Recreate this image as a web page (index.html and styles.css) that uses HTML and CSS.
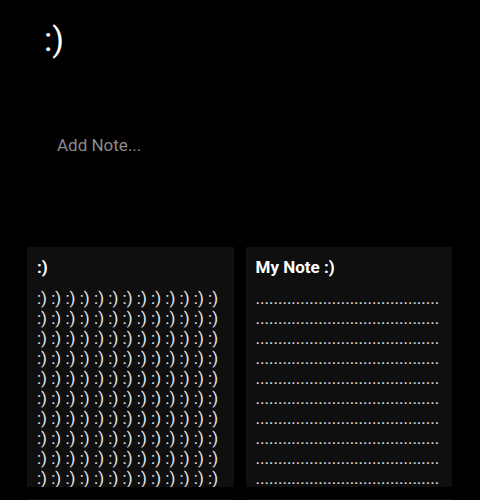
FILE: index.html
```html
<!DOCTYPE html>
<html>
<head>
<meta charset="utf-8">
<link rel="stylesheet" href="styles.css">
</head>
<body>
<div class="app">
  <h1 class="logo">:)</h1>
  <form class="add-form">
    <input class="add-input" type="text" placeholder="Add Note...">
  </form>
  <div class="notes">
    <div class="note">
      <div class="note-title">:)</div>
      <div class="note-body">:) :) :) :) :) :) :) :) :) :) :) :) :) :) :) :) :) :) :) :) :) :) :) :) :) :) :) :) :) :) :) :) :) :) :) :) :) :) :) :) :) :) :) :) :) :) :) :) :) :) :) :) :) :) :) :) :) :) :) :) :) :) :) :) :) :) :) :) :) :) :) :) :) :) :) :) :) :) :) :) :) :) :) :) :) :) :) :) :) :) :) :) :) :) :) :) :) :) :) :) :) :) :) :) :) :) :) :) :) :) :) :) :) :) :) :) :) :) :) :) :) :) :) :) :) :) :) :) :) :) :) :) :) :) :) :) :) :) :) :)</div>
    </div>
    <div class="note">
      <div class="note-title">My Note :)</div>
      <div class="note-body dots">.........................................................................................................................................................................................................................................................................................................................................................................................................................................................</div>
    </div>
    <div class="note"></div>
    <div class="note"></div>
  </div>
</div>
</body>
</html>
```
FILE: styles.css
```css
* { box-sizing: border-box; }
html, body {
  margin: 0;
  background: #000;
  color: #fff;
  font-family: Roboto, "Noto Sans", sans-serif;
  font-size: 17px;
}
.app {
  padding: 0 28px 0 27px;
}
.logo {
  margin: 0;
  padding: 19px 0 0 17px;
  font-size: 34px;
  font-weight: 400;
  line-height: 1.2;
}
.add-form {
  margin: 0;
  padding: 75px 0 0 20px;
}
.add-input {
  display: block;
  width: 100%;
  background: transparent;
  border: none;
  outline: none;
  color: #fff;
  font: inherit;
  padding: 0 10px;
}
.add-input::placeholder {
  color: #8a8a8a;
}
.notes {
  margin-top: 92px;
  display: grid;
  grid-template-columns: 1fr 1fr;
  gap: 12px;
}
.note {
  background: #0f0f0f;
  height: 240px;
  padding: 10px;
  overflow: hidden;
}
.note-title {
  font-weight: 700;
  margin-bottom: 11px;
}
.note-body {
  color: #e6e6e6;
  word-break: break-all;
}
.dots {
  overflow-wrap: anywhere;
}
```
